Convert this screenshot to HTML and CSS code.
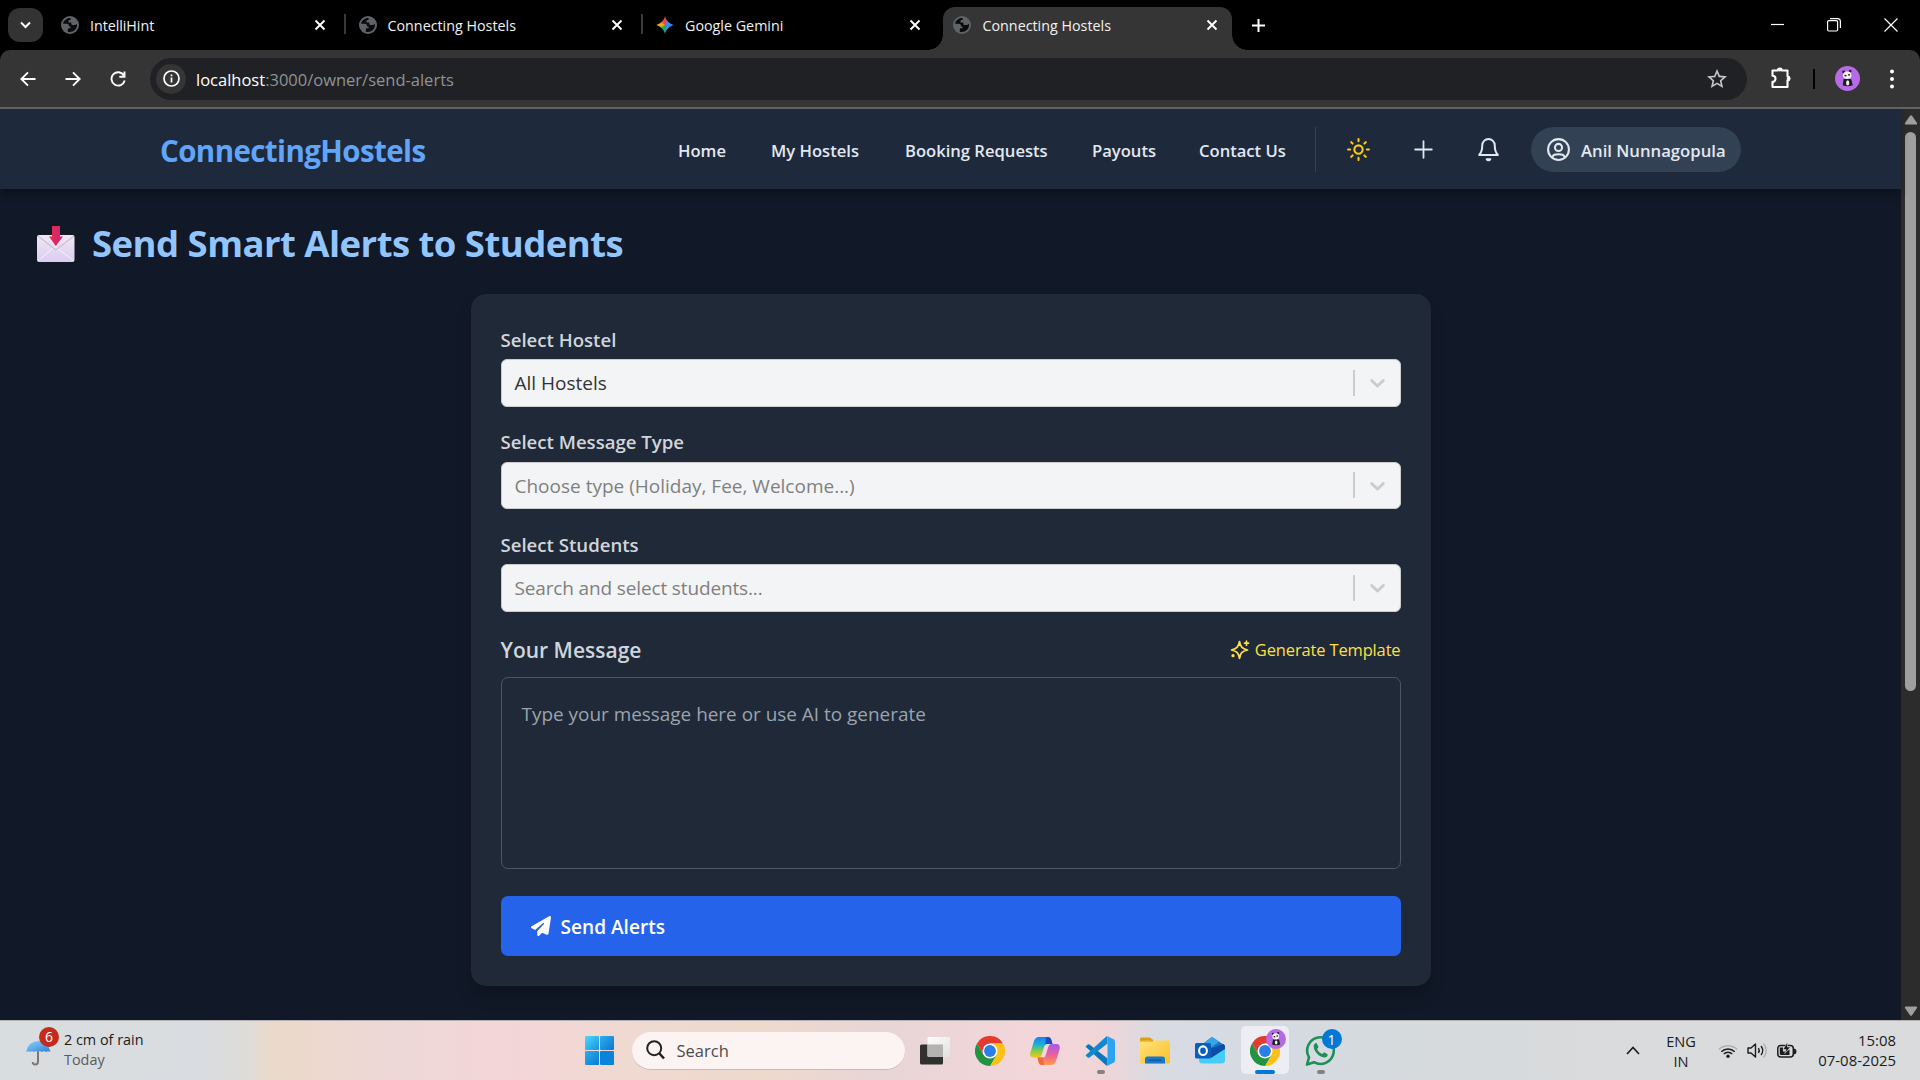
FILE: index.html
```html
<!DOCTYPE html>
<html lang="en">
<head>
<meta charset="utf-8">
<title>Connecting Hostels</title>
<link rel="stylesheet" href="styles.css">
</head>
<body>
<svg class="defs" aria-hidden="true">
  <defs>
    <linearGradient id="gWin" x1="0" y1="0" x2="1" y2="1"><stop offset="0" stop-color="#4fd8ff"/><stop offset="1" stop-color="#1593e0"/></linearGradient>
    <linearGradient id="gWin2" x1="0" y1="0" x2="1" y2="1"><stop offset="0" stop-color="#2eaeea"/><stop offset="1" stop-color="#0a78d4"/></linearGradient>
    <linearGradient id="gFolder" x1="0" y1="0" x2="1" y2="1"><stop offset="0" stop-color="#ffe27a"/><stop offset="1" stop-color="#fbc02a"/></linearGradient>
    <linearGradient id="gCopA" x1="0" y1="0" x2="0" y2="1"><stop offset="0" stop-color="#1c7fe8"/><stop offset=".35" stop-color="#16aee0"/><stop offset=".65" stop-color="#7ccb4e"/><stop offset="1" stop-color="#f3c915"/></linearGradient>
    <linearGradient id="gCopB" x1="0" y1="0" x2="0" y2="1"><stop offset="0" stop-color="#a45af0"/><stop offset=".5" stop-color="#e8609c"/><stop offset="1" stop-color="#ff9a4c"/></linearGradient>
    <linearGradient id="gUmb" x1="0" y1="0" x2="1" y2="1"><stop offset="0" stop-color="#8fd0fb"/><stop offset="1" stop-color="#2d83d8"/></linearGradient>
    <linearGradient id="gEnv" x1="0" y1="0" x2="0" y2="1"><stop offset="0" stop-color="#efe9f2"/><stop offset="1" stop-color="#dccbf2"/></linearGradient>
    <linearGradient id="gArrow" x1="0" y1="0" x2="1" y2="0"><stop offset="0" stop-color="#f0284a"/><stop offset="1" stop-color="#c42b78"/></linearGradient>
    <linearGradient id="gTvW" x1="0" y1="0" x2="1" y2="1"><stop offset="0" stop-color="#ffffff"/><stop offset="1" stop-color="#e2e2e2"/></linearGradient>
    <symbol id="globe" viewBox="0 0 18 18">
      <circle cx="9" cy="9" r="9" fill="#5f6368"/>
      <path d="M9.600 2C6 1.700 2.800 4.200 2 7.800h3.600c1.500 0 2.400.8 2.400 2v.8h1.500v1.600H8.300c-.9 0-1.500.5-1.500 1.300v2.200C11.500 17 16 13.600 16 9c0-.5 0-.9-.1-1.300-.8.9-1.500 1.300-2.500 1.300h-1.500c-1 0-1.600-.7-1.600-1.600V6.600H7.400V5.400c0-.9.700-1.500 1.500-1.500h.7z" class="globe-land"/>
    </symbol>
    <symbol id="close" viewBox="0 0 12 12"><path d="M1.500 1.500l9 9M10.500 1.500l-9 9" fill="none" stroke="#fff" stroke-width="1.900"/></symbol>
    <symbol id="chrome" viewBox="0 0 48 48">
      <path d="M24 12h20.800A24 24 0 0 0 3.200 12l10.400 18z" fill="#e33b2e"/>
      <path d="M34.400 30L24 48A24 24 0 0 0 44.800 12H24z" fill="#fbc116"/>
      <path d="M13.600 30L3.200 12A24 24 0 0 0 24 48l10.400-18z" fill="#229342"/>
      <circle cx="24" cy="24" r="12" fill="#fff"/><circle cx="24" cy="24" r="9.500" fill="#2b7de9"/>
    </symbol>
    <symbol id="panda" viewBox="0 0 26 26">
      <circle cx="13" cy="13" r="13" fill="#b66be6"/>
      <circle cx="9" cy="6.300" r="1.500" fill="#222"/><circle cx="15.800" cy="5.300" r="1.500" fill="#222"/>
      <path d="M9 13.500q4.500-2 8 .5l1.500 6q-5.500 2-10.500 0z" fill="#1d1d1d"/>
      <ellipse cx="12.700" cy="9.600" rx="4.400" ry="4" fill="#f2f2f2"/>
      <ellipse cx="10.900" cy="10" rx="1.200" ry=".9" fill="#222"/><ellipse cx="14.600" cy="9.100" rx="1.200" ry=".9" fill="#222"/>
      <ellipse cx="13.200" cy="17.600" rx="1.700" ry="2.700" fill="#eee"/>
    </symbol>
    <symbol id="chev" viewBox="0 0 20 20"><path d="M4.516 7.548c.436-.446 1.043-.481 1.576 0L10 11.295l3.908-3.747c.533-.481 1.141-.446 1.574 0 .436.445.408 1.197 0 1.615-.406.418-4.695 4.502-4.695 4.502a1.095 1.095 0 0 1-1.576 0S4.924 9.581 4.516 9.163s-.436-1.170 0-1.615z" fill="#ccc"/></symbol>
  </defs>
</svg>

<div class="browser">
  <div class="tabstrip">
    <div class="tab-search"><svg width="11" height="8" viewBox="0 0 11 8"><path d="M1 1.500l4.500 4.500L10 1.500" fill="none" stroke="#fff" stroke-width="2"/></svg></div>
    <div class="tab first"><svg class="fav"><use href="#globe"/></svg><span class="tab-title">IntelliHint</span><svg class="x"><use href="#close"/></svg></div>
    <div class="tab sep"><svg class="fav"><use href="#globe"/></svg><span class="tab-title">Connecting Hostels</span><svg class="x"><use href="#close"/></svg></div>
    <div class="tab sep">
      <div class="fav gemini"></div>
      <span class="tab-title">Google Gemini</span><svg class="x"><use href="#close"/></svg></div>
    <div class="tab active"><svg class="fav"><use href="#globe"/></svg><span class="tab-title">Connecting Hostels</span><svg class="x"><use href="#close"/></svg></div>
    <svg class="newtab" width="13" height="13" viewBox="0 0 13 13"><path d="M6.500 0v13M0 6.500h13" stroke="#fff" stroke-width="2"/></svg>
    <div class="win-controls">
      <svg width="13" height="14" viewBox="0 0 13 14"><path d="M0 6.500h13" stroke="#fff" stroke-width="1.200"/></svg>
      <svg width="14" height="14" viewBox="0 0 14 14"><rect x=".6" y="2.600" width="10" height="10.400" rx="1.200" fill="none" stroke="#fff" stroke-width="1.200"/><path d="M3 .6h7.500q2.900 0 2.900 2.900V10" fill="none" stroke="#fff" stroke-width="1.200"/></svg>
      <svg width="14" height="14" viewBox="0 0 14 14"><path d="M.5.500l13 13M13.500.500l-13 13" stroke="#fff" stroke-width="1.200"/></svg>
    </div>
  </div>

  <div class="toolbar">
    <svg class="nav-ic" viewBox="0 0 16 16"><path d="M15.500 8H1.500M8 1.300L1.300 8 8 14.700" fill="none" stroke="#fff" stroke-width="1.900"/></svg>
    <svg class="nav-ic" viewBox="0 0 16 16"><path d="M.5 8h14M8 1.300L14.700 8 8 14.700" fill="none" stroke="#fff" stroke-width="1.900"/></svg>
    <svg class="nav-ic" viewBox="0 0 16 16"><path d="M14 4.500A6.700 6.700 0 1 0 14.700 9.600M14.500.500v5.200H9.300" fill="none" stroke="#fff" stroke-width="1.900"/></svg>
    <div class="omnibox">
      <div class="site-info"><svg width="17" height="17" viewBox="0 0 17 17"><circle cx="8.500" cy="8.500" r="7.500" fill="none" stroke="#fff" stroke-width="1.700"/><path d="M8.500 7.400v5M8.500 4.400v1.800" stroke="#fff" stroke-width="1.700"/></svg></div>
      <span class="url"><b>localhost</b>:3000/owner/send-alerts</span>
      <svg class="star" width="20" height="20" viewBox="2 2 20 20"><path d="M22 9.240l-7.190-.62L12 2 9.190 8.630 2 9.240l5.460 4.730L5.820 21 12 17.270 18.180 21l-1.630-7.030L22 9.240zM12 15.400l-3.760 2.270 1-4.280-3.320-2.880 4.380-.38L12 6.100l1.710 4.040 4.380.38-3.320 2.880 1 4.280L12 15.400z" fill="#c7c7c7"/></svg>
    </div>
    <svg class="ext" width="22" height="24" viewBox="0 0 22 24"><path d="M2.500 4.500h5.300a2 2 0 0 1 4 0h5.700v6a1.800 1.800 0 0 1 0 3.800v6.700h-15v-5.200a2.900 2.900 0 0 0 0-6z" fill="none" stroke="#fff" stroke-width="2.100" stroke-linejoin="round"/><circle cx="9.800" cy="3.800" r="1.700" fill="#fff"/><circle cx="18.500" cy="12.400" r="1.700" fill="#fff"/></svg>
    <div class="tb-sep"></div>
    <svg class="avatar"><use href="#panda"/></svg>
    <svg class="dots" width="4" height="20" viewBox="0 0 4 20"><circle cx="2" cy="2.500" r="2" fill="#fff"/><circle cx="2" cy="10" r="2" fill="#fff"/><circle cx="2" cy="17.500" r="2" fill="#fff"/></svg>
  </div>
</div>

<div class="viewport">
  <div class="page">
    <header class="site-header">
      <span class="logo">ConnectingHostels</span>
      <nav class="nav">
        <a class="n1">Home</a><a class="n2">My Hostels</a><a class="n3">Booking Requests</a><a class="n4">Payouts</a><a class="n5">Contact Us</a>
      </nav>
      <div class="actions">
        <div class="icon-btn"><svg width="25" height="25" viewBox="0 0 24 24" fill="none" stroke="#facc15" stroke-width="2" stroke-linecap="round" stroke-linejoin="round"><circle cx="12" cy="12" r="4"/><path d="M12 2v2M12 20v2M4.930 4.930l1.410 1.410M17.660 17.660l1.410 1.410M2 12h2M20 12h2M6.340 17.660l-1.410 1.410M19.070 4.930l-1.410 1.410"/></svg></div>
        <div class="icon-btn"><svg width="25" height="25" viewBox="0 0 24 24" fill="none" stroke="#e2e8f0" stroke-width="1.700" stroke-linecap="round"><path d="M12 4v16M4 12h16"/></svg></div>
        <div class="icon-btn"><svg width="25" height="25" viewBox="0 0 24 24" fill="none" stroke="#e2e8f0" stroke-width="1.900" stroke-linecap="round" stroke-linejoin="round"><path d="M18 8A6 6 0 0 0 6 8c0 6-1.200 7.500-3 9.200h18C19.200 15.500 18 14 18 8"/><path d="M10.300 21.300a1.940 1.940 0 0 0 3.400 0z" fill="#e2e8f0"/></svg></div>
        <div class="user-pill"><svg width="25" height="25" viewBox="0 0 24 24" fill="none" stroke="#e2e8f0" stroke-width="2" stroke-linecap="round"><circle cx="12" cy="12" r="10"/><circle cx="12" cy="10" r="3.400"/><path d="M6 19.500C6.800 16.800 8.500 16.600 12 16.600s5.200.2 6 2.900"/></svg><span>Anil Nunnagopula</span></div>
      </div>
    </header>

    <main class="content">
      <h1 class="title">
        <svg width="38" height="37" viewBox="0 0 38 37"><rect x="0" y="9" width="37.500" height="27" rx="2" fill="url(#gEnv)"/><path d="M1 35l17-14.500L37 35" fill="none" stroke="#f5f0fa" stroke-width="1"/><path d="M1 10l17.800 14L37 10" fill="none" stroke="#cdbfd6" stroke-width="1.300"/><path d="M15 0h8v10.500h3L18.800 20 12 10.500h3z" fill="url(#gArrow)"/></svg>
        <span>Send Smart Alerts to Students</span>
      </h1>
      <form class="card">
        <label class="label">Select Hostel</label>
        <div class="select"><span class="value">All Hostels</span><i></i><svg><use href="#chev"/></svg></div>
        <label class="label">Select Message Type</label>
        <div class="select"><span class="placeholder">Choose type (Holiday, Fee, Welcome...)</span><i></i><svg><use href="#chev"/></svg></div>
        <label class="label">Select Students</label>
        <div class="select"><span class="placeholder students">Search and select students...</span><i></i><svg><use href="#chev"/></svg></div>
        <div class="msg-head">
          <span class="msg-label">Your Message</span>
          <a class="generate"><svg width="20" height="20" viewBox="0 0 20 20" fill="none" stroke="#fde047" stroke-width="1.700" stroke-linejoin="round" stroke-linecap="round"><path d="M9.500 1.500c.8 5.200 2.500 7.100 8 8.500-5.500 1.200-7.200 3-8 8.500-.8-5.500-2.500-7.300-8-8.500 5.500-1.400 7.200-3.300 8-8.500z"/><path d="M16.500 1.200v4M14.500 3.200h4"/><circle cx="3" cy="15.700" r=".8" fill="#fde047"/></svg><span>Generate Template</span></a>
        </div>
        <div class="textarea">Type your message here or use AI to generate</div>
        <button type="button" class="send"><svg width="20" height="20" viewBox="0 0 512 512"><path d="M498.100 5.600c10.100 7 15.400 19.100 13.500 31.200l-64 416c-1.500 9.700-7.400 18.200-16 23s-18.900 5.400-28 1.600L284 427.700l-68.500 74.100c-8.900 9.700-22.900 12.900-35.200 8.100S160 493.200 160 480v-83.600c0-4 1.500-7.800 4.200-10.800L331.800 202.800c5.800-6.300 5.600-16-.4-22s-15.700-6.400-22-.7L106 360.800 17.700 316.600C7.100 311.300.3 300.700 0 288.900s5.900-22.800 16.100-28.700l448-256c10.700-6.100 23.900-5.500 34 1.400z" fill="#fff"/></svg><span>Send Alerts</span></button>
      </form>
    </main>
  </div>
  <div class="scrollbar">
    <svg width="14" height="10" viewBox="0 0 14 10"><path d="M6 .8q1-1 2 0l5 7.200q.5 1.500-1 1.500H2Q.5 9.500 1 8z" fill="#9f9f9f"/></svg>
    <div class="thumb"></div>
    <svg class="down" width="14" height="10" viewBox="0 0 14 10"><path d="M6 9.200q1 1 2 0L13 2Q13.500.5 12 .5H2Q.5.500 1 2z" fill="#9f9f9f"/></svg>
  </div>
</div>

<div class="taskbar">
  <div class="weather">
    <div class="umb"><svg width="25" height="26" viewBox="0 0 25 26"><path d="M12 11v10.500q0 3-2.700 3T6.800 22" fill="none" stroke="#7d7672" stroke-width="2"/><path d="M0 12Q2 1.500 12 1q10.500.5 12.500 11-2.300-1.500-4.300 0-2-1.500-4.200 0-2.200-1.500-4.200 0-2-1.500-4 0-1.800-1.500-3.800 0-2-1.500-4 0z" fill="url(#gUmb)"/></svg><span class="badge red">6</span></div>
    <div class="weather-text"><span>2 cm of rain</span><span class="day">Today</span></div>
  </div>
  <svg class="start" width="29" height="29" viewBox="0 0 29 29"><rect width="14" height="14" rx="1" fill="url(#gWin)"/><rect x="15" width="14" height="14" rx="1" fill="url(#gWin2)"/><rect y="15" width="14" height="14" rx="1" fill="url(#gWin2)"/><rect x="15" y="15" width="14" height="14" rx="1" fill="#0b82dc"/></svg>
  <div class="search"><svg width="19" height="20" viewBox="0 0 19 20"><circle cx="8.200" cy="8.200" r="7" fill="none" stroke="#222" stroke-width="2"/><path d="M13 13l5 5.500" stroke="#222" stroke-width="2.600"/></svg><span>Search</span></div>
  <div class="apps">
    <div class="app"><svg width="30" height="28" viewBox="0 0 30 28"><rect x="0" y="7.500" width="23" height="20" rx="1.500" fill="#30302f"/><rect x="7.500" y="0" width="22.500" height="20" rx="1.500" fill="url(#gTvW)" opacity=".95"/><path d="M7.500 7.500H23v12.500H9q-1.500 0-1.500-1.500z" fill="#b4b3b2"/></svg></div>
    <div class="app"><svg width="30" height="30"><use href="#chrome"/></svg></div>
    <div class="app"><svg width="30" height="28" viewBox="0 0 30 28"><path d="M9 0h9q2.500 0 3.200 2.500L22.500 7H17q-2 0-2.700 2.300l-2.600 8.500Q11 20.500 8.500 20.500H3.500Q-.5 20.500.3 16L4 4Q5.500 0 9 0z" fill="url(#gCopA)"/><path d="M16 0h2q2.500 0 3.200 2.500L22.500 7H17q-1 0-1.700.7z" fill="#1a4fc4"/><path d="M21 28h-9q-2.500 0-3.200-2.500L7.500 20.500H13q2 0 2.700-2.300l2.600-8.500Q19 7 21.500 7h5Q30.500 7 29.700 12L26 24Q24.500 28 21 28z" fill="url(#gCopB)"/><path d="M14 28h-2q-2.500 0-3.200-2.500L7.500 20.500H13z" fill="#f2693f"/></svg></div>
    <div class="app"><svg width="30" height="30" viewBox="0 0 100 100"><path d="M3 34l6-5.500q3-2 6 0L75 75v24q-3 .5-6-2.500L3 37q-2-1.500 0-3z" fill="#0a78bd"/><path d="M3 66l6 5.500q3 2 6 0L75 25V1q-3-.5-6 2.500L3 63q-2 1.500 0 3z" fill="#1188d0"/><path d="M75 99V1l20 9.500q5 2.500 5 8v63q0 5.500-5 8z" fill="#2aa3f1"/></svg><em></em></div>
    <div class="app"><svg width="30" height="27" viewBox="0 0 30 27"><path d="M0 2Q0 .5 1.500.5H9q1.500 0 2.300 1L13 4.500H0z" fill="#dd9f12"/><rect y="3.500" width="30" height="23" rx="1.500" fill="url(#gFolder)"/><path d="M0 3.500h10l2.500-1h.5v2H0z" fill="#dd9f12"/><path d="M5 26.500V22q0-2.500 2.500-2.500h15Q25 19.500 25 22v4.500z" fill="#1878ca"/><path d="M8.500 23.200h13" stroke="#0b56a5" stroke-width="1.300"/></svg></div>
    <div class="app"><svg width="30" height="27" viewBox="0 0 30 27"><path d="M4 10L16 .5q1-.7 2 0L29 8q1 1 1 2v5H4z" fill="#1379cf"/><path d="M7.500 7.300L16 .5q1-.7 2 0l6 4.200-9 6.300z" fill="#37a6e6"/><path d="M14 14l14.500-6.500Q30 8.500 30 10v2L17 20z" fill="#0c4497"/><path d="M4 15h12l14-4v12q0 3.500-3.500 3.500h-19Q4 26.500 4 23z" fill="#45cdf6"/><path d="M14 12l14.500-5Q30 8 30 9.500V12L16 21z" fill="#0c4da5"/><rect y="6" width="16" height="15.500" rx="1.500" fill="#0a5fbe"/><ellipse cx="8" cy="13.700" rx="3.900" ry="4.300" fill="none" stroke="#fff" stroke-width="2.100"/></svg></div>
    <div class="app current"><svg width="30" height="30"><use href="#chrome"/></svg><svg class="badge-av"><use href="#panda"/></svg><em></em></div>
    <div class="app"><svg width="31" height="31" viewBox="0 0 31 31"><path d="M2 29.500l2-7.200A13.300 13.300 0 1 1 9 27.200z" fill="none" stroke="#1f8f57" stroke-width="2.600" stroke-linejoin="round"/><path d="M11.500 8c-1.800 0-3 1.800-2.800 3.800.5 5 5.500 10.300 10.300 10.700 2 .2 3.800-1.200 3.800-3l-3.600-2.300-1.900 1.800c-2.500-1-4.300-2.900-5.200-5l1.500-2z" fill="#1f8f57"/></svg><span class="badge blue">1</span><em></em></div>
  </div>
  <div class="tray">
    <svg class="up" width="14" height="9" viewBox="0 0 14 9"><path d="M1 8l6-6.500L13 8" fill="none" stroke="#1c1c1c" stroke-width="1.700"/></svg>
    <div class="lang"><span>ENG</span><span>IN</span></div>
    <svg width="20" height="16" viewBox="0 0 20 16" fill="none" stroke="#1c1c1c" stroke-width="1.500"><path d="M.8 6.500a13 13 0 0 1 18.400 0" stroke="#b0b1b3"/><path d="M3.300 8.700a9.600 9.600 0 0 1 13.400 0M5.800 11a6 6 0 0 1 8.400 0"/><circle cx="10" cy="13.300" r="1.700" fill="#1c1c1c" stroke="none"/></svg>
    <svg width="21" height="17" viewBox="0 0 21 17" fill="none" stroke="#1c1c1c" stroke-width="1.400"><path d="M1 6v5h3l4.500 4V2L4 6z" stroke-linejoin="round"/><path d="M11.500 6q1.500 2.500 0 5M14 4q3.500 4.500 0 9"/><path d="M16.500 1.500q5.500 7 0 14" stroke="#b0b1b3"/></svg>
    <svg width="20" height="17" viewBox="0 0 20 17"><rect x=".8" y="3.500" width="15.500" height="11.500" rx="3" fill="none" stroke="#1c1c1c" stroke-width="1.500"/><path d="M17.500 7q1.500 0 1.500 2.500t-1.500 2.500z" fill="#1c1c1c" stroke="#1c1c1c"/><path d="M2.800 5.500H6v4h3.500l3-2V13H4q-1.200 0-1.200-1.200z" fill="#1c1c1c"/><path d="M10.500 0L6 7.500h3L7.800 11.500 13.500 5h-3z" fill="#1c1c1c" stroke="#d8dadd" stroke-width=".6"/></svg>
    <div class="clock"><span>15:08</span><span>07-08-2025</span></div>
  </div>
</div>
</body>
</html>
```
FILE: styles.css
```css
* { box-sizing: border-box; }
body {
  margin: 0;
  width: 1920px;
  height: 1080px;
  overflow: hidden;
  display: flex;
  flex-direction: column;
  font-family: "Open Sans", "Noto Sans", sans-serif;
  background: #111827;
  white-space: nowrap;
}
svg { display: block; flex: none; }
.defs { position: absolute; width: 0; height: 0; }

/* Browser chrome */
.browser { background: #000; }
.tabstrip { display: flex; align-items: center; height: 50px; padding-left: 8px; }
.tab-search {
  display: flex; align-items: center; justify-content: center;
  width: 35px; height: 34px; border-radius: 12px; background: #333;
}
.tab { display: flex; align-items: center; position: relative; width: 297.500px; height: 50px; padding-left: 13px; }
.tab.first { margin-left: 5px; }
.tab.sep::before { content: ""; position: absolute; left: -2px; top: 14px; width: 2px; height: 20px; background: #3a3a3a; }
.fav { width: 18px; height: 18px; margin-right: 11px; flex: none; }
.globe-land { fill: #0b0b0b; }
.active .globe-land { fill: #353535; }
.tab-title { flex: 1; font-size: 14.300px; color: #f1f1f1; }
.tab.first .tab-title { letter-spacing: -.05px; }
.tab .x { width: 12px; height: 12px; margin-right: 20px; }
.tab.active { width: 289px; height: 43px; margin: 7px 0 0 2px; padding: 0 0 7px 10px; border-radius: 12px 12px 0 0; background: #353535; }
.tab.active .fav { margin-right: 12px; }
.tab.active .x { margin-right: 14px; }
.tab.active::before, .tab.active::after { content: ""; position: absolute; bottom: 0; width: 15px; height: 15px; }
.tab.active::before { left: -15px; background: radial-gradient(circle at 0 0, transparent 14.500px, #353535 15px); }
.tab.active::after { right: -15px; background: radial-gradient(circle at 100% 0, transparent 14.500px, #353535 15px); }
.gemini {
  background: conic-gradient(from 0deg, #e8453c, #4285f4 50deg, #3b84f5 150deg, #1fa463 190deg, #3fa84a 225deg, #f4b912 270deg, #e8453c 340deg);
  clip-path: path("M9 0C10.200 4.500 13.500 7.800 18 9 13.500 10.200 10.200 13.500 9 18 7.800 13.500 4.500 10.200 0 9 4.500 7.800 7.800 4.500 9 0Z");
}
.newtab { margin-left: 20px; }
.win-controls { display: flex; gap: 43px; margin-left: auto; padding-right: 22px; }

.toolbar {
  display: flex; align-items: center; height: 59px; padding: 0 0 0 20px;
  background: #353535; border-bottom: 2px solid #636363; border-radius: 10px 10px 0 0;
}
.nav-ic { width: 16px; height: 16px; margin-right: 29px; }
.omnibox { display: flex; align-items: center; width: 1597px; height: 42px; margin-left: -5px; padding: 0 20px 0 6px; border-radius: 21px; background: #202124; }
.site-info { display: flex; align-items: center; justify-content: center; width: 30px; height: 30px; border-radius: 50%; background: #353535; margin-right: 10px; }
.url { font-size: 16.500px; padding-top: 1px; color: #8f9296; flex: 1; }
.url b { font-weight: 400; color: #fff; }
.ext { margin: 0 0 2px 23px; }
.tb-sep { width: 2px; height: 20px; margin-left: 21px; background: #000; }
.avatar { width: 25px; height: 25px; margin-left: 20px; }
.dots { margin-left: 30px; }

/* Site */
.viewport { display: flex; height: 911px; }
.page { width: 1901px; background: #111827; }
.site-header {
  display: flex; align-items: center; height: 80px; padding: 0 160px; position: relative;
  background: #1e293b; box-shadow: 0 5px 8px rgba(0, 0, 0, .3);
}
.logo { width: 518px; padding-top: 2px; font-size: 29.500px; letter-spacing: -.6px; font-weight: 700; color: #60a5fa; }
.nav { display: flex; gap: 45px; padding-top: 2px; font-size: 16.600px; font-weight: 600; color: #e2e8f0; }
.n1 { width: 48px; } .n2 { width: 89px; } .n3 { width: 142px; } .n4 { width: 62px; } .n5 { width: 86px; }
.actions { display: flex; align-items: center; gap: 20px; height: 45px; margin-left: auto; padding-left: 20px; border-left: 1px solid #334155; }
.icon-btn { display: flex; align-items: center; justify-content: center; width: 45px; height: 45px; }
.user-pill {
  display: flex; align-items: center; gap: 10px; width: 210px; height: 45px; padding-left: 15px;
  border-radius: 23px; background: #334155; color: #e2e8f0; font-size: 16.700px; font-weight: 600;
}
.user-pill span { padding-top: 2px; }
.content { padding-top: 30px; }
.title { display: flex; align-items: center; gap: 17px; height: 45px; margin: 0 0 30px; padding-left: 37px; font-size: 36.500px; letter-spacing: -.53px; font-weight: 700; color: #93c5fd; }
.title svg { margin-top: 6px; }
.title span { padding-top: 2px; }
.card { width: 960px; height: 692px; margin: 0 auto; padding: 30px; border-radius: 15px; background: #1f2937; box-shadow: 0 12px 18px -4px rgba(0, 0, 0, .25); }
.label { display: flex; align-items: center; height: 30px; margin-bottom: 5px; font-size: 18.600px; font-weight: 600; color: #d1d5db; }
.select { display: flex; align-items: center; height: 47.500px; margin-bottom: 20px; padding-left: 13px; border: 1px solid #ccc; border-radius: 6px; background: #f3f4f6; font-size: 19px; }
.select span { flex: 1; padding-top: 1px; }
.value { color: #333; }
.placeholder { color: #808080; }
.students { letter-spacing: -.14px; }
.select i { width: 2px; height: 26px; background: #ccc; }
.select svg { width: 25px; height: 25px; margin: 0 10px; }
.msg-head { display: flex; align-items: center; justify-content: space-between; height: 30px; margin: 23px 0 12px; }
.msg-label { font-size: 21px; font-weight: 600; color: #d1d5db; }
.generate { display: flex; align-items: center; gap: 5px; font-size: 16.500px; letter-spacing: -.15px; color: #fde047; }
.textarea { height: 192px; padding: 21px 20px; border: 1px solid #4b5563; border-radius: 7px; font-size: 18.930px; line-height: 30px; color: #9ca3af; }
.send { display: flex; align-items: center; gap: 10px; width: 100%; height: 60px; margin-top: 27px; padding: 0 30px; border: 0; border-radius: 7px; background: #2563eb; color: #fff; font: 600 19.100px "Open Sans", sans-serif; }
.send span { padding-top: 2px; }

.scrollbar { display: flex; flex-direction: column; align-items: center; width: 19px; padding: 6px 0 4px; background: #2c2c2c; }
.thumb { width: 11px; height: 559px; margin-top: 7px; border-radius: 6px; background: #9f9f9f; }
.down { margin-top: auto; }

/* Taskbar */
.taskbar {
  display: flex; align-items: center; position: relative; height: 60px; border-top: 1px solid #b3b0b2; color: #1b1b1b;
  background: linear-gradient(90deg, #d8dddf 0, #d9dce0 200px, #dedcd9 245px, #e9dacb 270px, #ecd9cc 300px, #eed7d7 400px, #f3d5d8 520px, #efd9d1 620px, #eed9cd 770px, #e8d5d6 880px, #f3d6d9 1040px, #f0d5d8 1100px, #d8dbe2 1160px, #d5dae3 1270px, #d6dadc 1440px, #dadbdd 1650px, #dadbdd 1920px);
}
.weather { display: flex; width: 585px; padding-left: 26px; }
.umb { position: relative; margin-top: 8px; }
.badge { position: absolute; display: flex; align-items: center; justify-content: center; width: 20px; height: 20px; border-radius: 50%; color: #fff; font-size: 14px; }
.badge.red { left: 13px; top: -13px; background: #c42b1c; }
.badge.blue { right: 6px; top: 8px; background: #0078d4; }
.weather-text { display: flex; flex-direction: column; margin: -2px 0 0 13px; font-size: 14.400px; line-height: 20px; }
.day { color: #5a5b5d; }
.search { display: flex; align-items: center; gap: 12px; width: 273px; height: 38px; margin-left: 17.500px; padding-left: 14px; border-radius: 19px; background: #fbf4f2; border-bottom: 1px solid #cdb9b4; color: #4d4b4b; font-size: 16.500px; }
.search span { padding-top: 1px; }
.apps { display: flex; margin-left: 3px; }
.app { position: relative; display: flex; align-items: center; justify-content: center; width: 55px; height: 59px; }
.app svg { position: relative; }
.app em { position: absolute; bottom: 6px; left: 24px; width: 8px; height: 4px; border-radius: 2px; background: #85807f; }
.current em { left: 17.500px; width: 20px; background: #0078d7; }
.current::before { content: ""; position: absolute; left: 3.500px; top: 5px; width: 48px; height: 48px; border-radius: 5px; background: #eceef3; }
.app .badge-av { position: absolute; left: 28.500px; top: 8px; width: 20px; height: 20px; }
.tray { display: flex; align-items: center; margin-left: auto; padding-right: 24px; }
.lang { display: flex; flex-direction: column; align-items: center; width: 30px; margin: 0 22px 0 26px; font-size: 14.600px; line-height: 20px; }
.tray svg + svg { margin-left: 9px; }
.clock { display: flex; flex-direction: column; align-items: flex-end; width: 99px; padding-bottom: 1px; font-size: 14.900px; line-height: 20px; }
```
